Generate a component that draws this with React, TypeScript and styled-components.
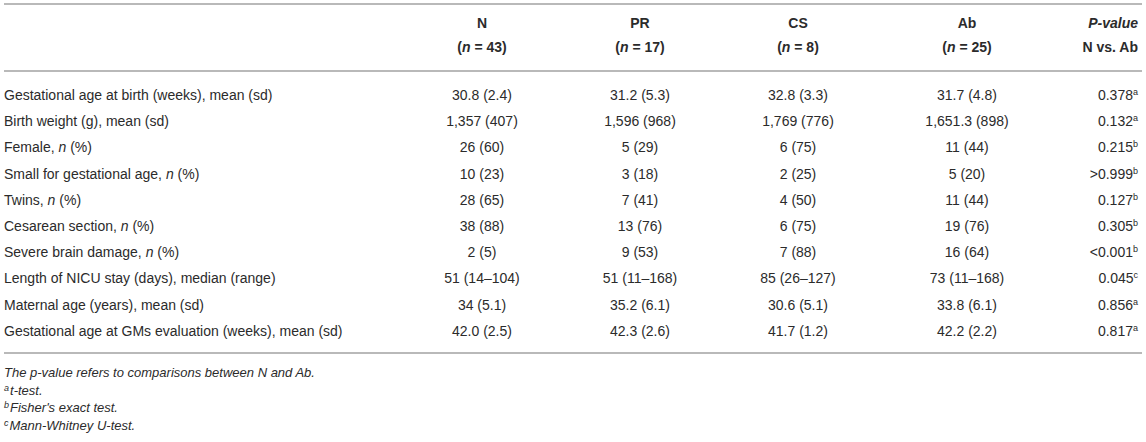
import styled, { createGlobalStyle } from "styled-components";

const GlobalStyle = createGlobalStyle`
  body {
    margin: 0;
    background: #fff;
    font-family: "Liberation Sans", Arial, sans-serif;
    color: #2b2b2b;
  }
`;

const Page = styled.div`
  padding: 3px 4px 0;
  width: 1138px;
`;

const Table = styled.table`
  width: 100%;
  border-collapse: collapse;
  table-layout: fixed;
  font-size: 14px;
  border-top: 2px solid #b9b9b9;
  border-bottom: 2px solid #b9b9b9;
`;

const Col = styled.col<{ $w: number }>`
  width: ${(p) => p.$w}px;
`;

const HeadRow = styled.tr<{ $second?: boolean }>`
  border-bottom: ${(p) => (p.$second ? "2px solid #b9b9b9" : "none")};
`;

const Th = styled.th<{ $right?: boolean; $second?: boolean }>`
  font-weight: bold;
  text-align: ${(p) => (p.$right ? "right" : "center")};
  line-height: 16px;
  padding: ${(p) => (p.$second ? "3px 4px 15px" : "10px 4px 5px")};
  white-space: nowrap;
`;

const Body = styled.tbody`
  tr:first-child td {
    padding-top: 15px;
  }
  tr:last-child td {
    padding-bottom: 13px;
  }
`;

const Td = styled.td<{ $align?: "left" | "center" | "right" }>`
  text-align: ${(p) => p.$align ?? "center"};
  line-height: 16.2px;
  padding: 5px 4px;
  white-space: nowrap;
  padding-left: ${(p) => (p.$align === "left" ? "0" : "4px")};
`;

const Sup = styled.sup`
  font-size: 9px;
  vertical-align: 5px;
  line-height: 0;
`;

const Notes = styled.div`
  padding-top: 10px;
  font-size: 13px;
  font-style: italic;
  line-height: 17.7px;
`;

const NoteSup = styled.sup`
  font-size: 9px;
  vertical-align: 4px;
  line-height: 0;
  margin-right: 1px;
`;

type Row = {
  label: React.ReactNode;
  vals: string[];
  p: string;
  sup: string;
};

const rows: Row[] = [
  { label: "Gestational age at birth (weeks), mean (sd)", vals: ["30.8 (2.4)", "31.2 (5.3)", "32.8 (3.3)", "31.7 (4.8)"], p: "0.378", sup: "a" },
  { label: "Birth weight (g), mean (sd)", vals: ["1,357 (407)", "1,596 (968)", "1,769 (776)", "1,651.3 (898)"], p: "0.132", sup: "a" },
  { label: <>Female, <i>n</i> (%)</>, vals: ["26 (60)", "5 (29)", "6 (75)", "11 (44)"], p: "0.215", sup: "b" },
  { label: <>Small for gestational age, <i>n</i> (%)</>, vals: ["10 (23)", "3 (18)", "2 (25)", "5 (20)"], p: ">0.999", sup: "b" },
  { label: <>Twins, <i>n</i> (%)</>, vals: ["28 (65)", "7 (41)", "4 (50)", "11 (44)"], p: "0.127", sup: "b" },
  { label: <>Cesarean section, <i>n</i> (%)</>, vals: ["38 (88)", "13 (76)", "6 (75)", "19 (76)"], p: "0.305", sup: "b" },
  { label: <>Severe brain damage, <i>n</i> (%)</>, vals: ["2 (5)", "9 (53)", "7 (88)", "16 (64)"], p: "<0.001", sup: "b" },
  { label: "Length of NICU stay (days), median (range)", vals: ["51 (14–104)", "51 (11–168)", "85 (26–127)", "73 (11–168)"], p: "0.045", sup: "c" },
  { label: "Maternal age (years), mean (sd)", vals: ["34 (5.1)", "35.2 (6.1)", "30.6 (5.1)", "33.8 (6.1)"], p: "0.856", sup: "a" },
  { label: "Gestational age at GMs evaluation (weeks), mean (sd)", vals: ["42.0 (2.5)", "42.3 (2.6)", "41.7 (1.2)", "42.2 (2.2)"], p: "0.817", sup: "a" },
];

const groups = [
  { name: "N", n: "43" },
  { name: "PR", n: "17" },
  { name: "CS", n: "8" },
  { name: "Ab", n: "25" },
];

export default function App() {
  return (
    <Page>
      <GlobalStyle />
      <Table>
        <colgroup>
          <Col $w={399} />
          <Col $w={158} />
          <Col $w={158} />
          <Col $w={158} />
          <Col $w={180} />
          <Col $w={85} />
        </colgroup>
        <thead>
          <HeadRow>
            <Th />
            {groups.map((g) => (
              <Th key={g.name}>{g.name}</Th>
            ))}
            <Th $right>
              <i>P-value</i>
            </Th>
          </HeadRow>
          <HeadRow $second>
            <Th $second />
            {groups.map((g) => (
              <Th key={g.name} $second>
                (<i>n</i> = {g.n})
              </Th>
            ))}
            <Th $second $right>
              N vs. Ab
            </Th>
          </HeadRow>
        </thead>
        <Body>
          {rows.map((r, i) => (
            <tr key={i}>
              <Td $align="left">{r.label}</Td>
              {r.vals.map((v, j) => (
                <Td key={j}>{v}</Td>
              ))}
              <Td $align="right">
                {r.p}
                <Sup>{r.sup}</Sup>
              </Td>
            </tr>
          ))}
        </Body>
      </Table>
      <Notes>
        <div>The p-value refers to comparisons between N and Ab.</div>
        <div>
          <NoteSup>a</NoteSup>t-test.
        </div>
        <div>
          <NoteSup>b</NoteSup>Fisher's exact test.
        </div>
        <div>
          <NoteSup>c</NoteSup>Mann-Whitney U-test.
        </div>
      </Notes>
    </Page>
  );
}
